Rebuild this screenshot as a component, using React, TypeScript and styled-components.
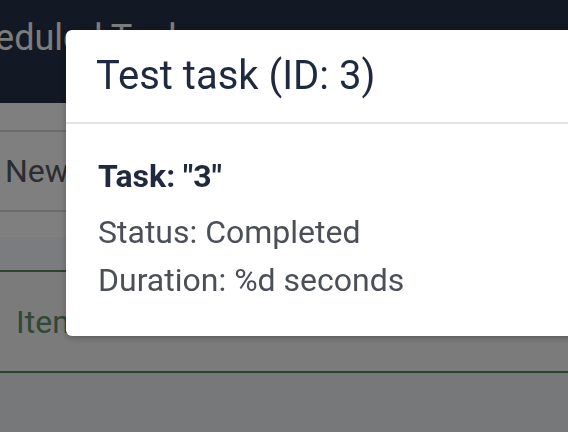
import React from 'react';
import styled, { createGlobalStyle } from 'styled-components';

const GlobalStyle = createGlobalStyle`
  html, body {
    margin: 0;
    padding: 0;
    height: 100%;
    overflow: hidden;
    background: #ffffff;
    font-family: Roboto, 'Noto Sans', 'Liberation Sans', sans-serif;
  }
  #root {
    height: 100%;
  }
`;

const Page = styled.div`
  display: flex;
  flex-direction: column;
  height: 100%;
  background: #eef0f4;
`;

const NavBar = styled.header`
  height: 103px;
  flex-shrink: 0;
  background: #263248;
  display: flex;
  align-items: flex-start;
  padding-top: 10px;
  box-sizing: border-box;
`;

const NavTitle = styled.h1`
  margin: 0 0 0 -65px;
  font-size: 36px;
  line-height: 56px;
  font-weight: 400;
  color: #f9fafb;
  white-space: nowrap;
`;

const Content = styled.main`
  display: flex;
  flex-direction: column;
  background: #ffffff;
  padding-top: 27px;
`;

const Row = styled.div<{ $line: string; $bg?: string; $height: number }>`
  display: flex;
  align-items: center;
  height: ${(p) => p.$height}px;
  border-top: 2px solid ${(p) => p.$line};
  border-bottom: 2px solid ${(p) => p.$line};
  background: ${(p) => p.$bg || '#ffffff'};
`;

const Gap = styled.div<{ $height: number; $bg?: string }>`
  height: ${(p) => p.$height}px;
  background: ${(p) => p.$bg || '#ffffff'};
`;

const Cell = styled.span<{ $color: string; $indent: number }>`
  padding-left: ${(p) => p.$indent}px;
  font-size: 32px;
  color: ${(p) => p.$color};
`;

const Rest = styled.div`
  flex: 1;
  background: #eef0f4;
`;

const Overlay = styled.div`
  position: fixed;
  inset: 0;
  background: rgba(0, 0, 0, 0.5);
`;

const Dialog = styled.div`
  position: fixed;
  left: 66px;
  top: 30px;
  width: 600px;
  background: #ffffff;
  border-radius: 6px;
  box-shadow: 0 2px 6px rgba(0, 0, 0, 0.25);
  overflow: hidden;
`;

const DialogHeader = styled.div`
  padding: 16px 30px;
  border-bottom: 2px solid #e2e4e8;
`;

const DialogTitle = styled.h2`
  margin: 0;
  font-size: 40px;
  line-height: 60px;
  font-weight: 400;
  color: #1f2a40;
`;

const DialogBody = styled.div`
  padding: 28px 32px 32px;
`;

const TaskName = styled.p`
  margin: 0 0 8px;
  font-size: 32px;
  line-height: 48px;
  font-weight: 700;
  color: #1f2a40;
`;

const Info = styled.p`
  margin: 0;
  font-size: 32px;
  line-height: 48px;
  color: #4b5058;
`;

const App: React.FC = () => {
  return (
    <>
      <GlobalStyle />
      <Page>
        <NavBar>
          <NavTitle>Scheduled Tasks</NavTitle>
        </NavBar>
        <Content>
          <Row $line="#d5d6da" $height={78}>
            <Cell $color="#565a60" $indent={5}>
              New
            </Cell>
          </Row>
          <Gap $height={25} />
          <Gap $height={33} $bg="#f6f8fe" />
          <Row $line="#588660" $bg="#f6f6f6" $height={99}>
            <Cell $color="#5c9468" $indent={16}>
              Item
            </Cell>
          </Row>
        </Content>
        <Rest />
      </Page>
      <Overlay />
      <Dialog>
        <DialogHeader>
          <DialogTitle>Test task (ID: 3)</DialogTitle>
        </DialogHeader>
        <DialogBody>
          <TaskName>Task: "3"</TaskName>
          <Info>Status: Completed</Info>
          <Info>Duration: %d seconds</Info>
        </DialogBody>
      </Dialog>
    </>
  );
};

export default App;
